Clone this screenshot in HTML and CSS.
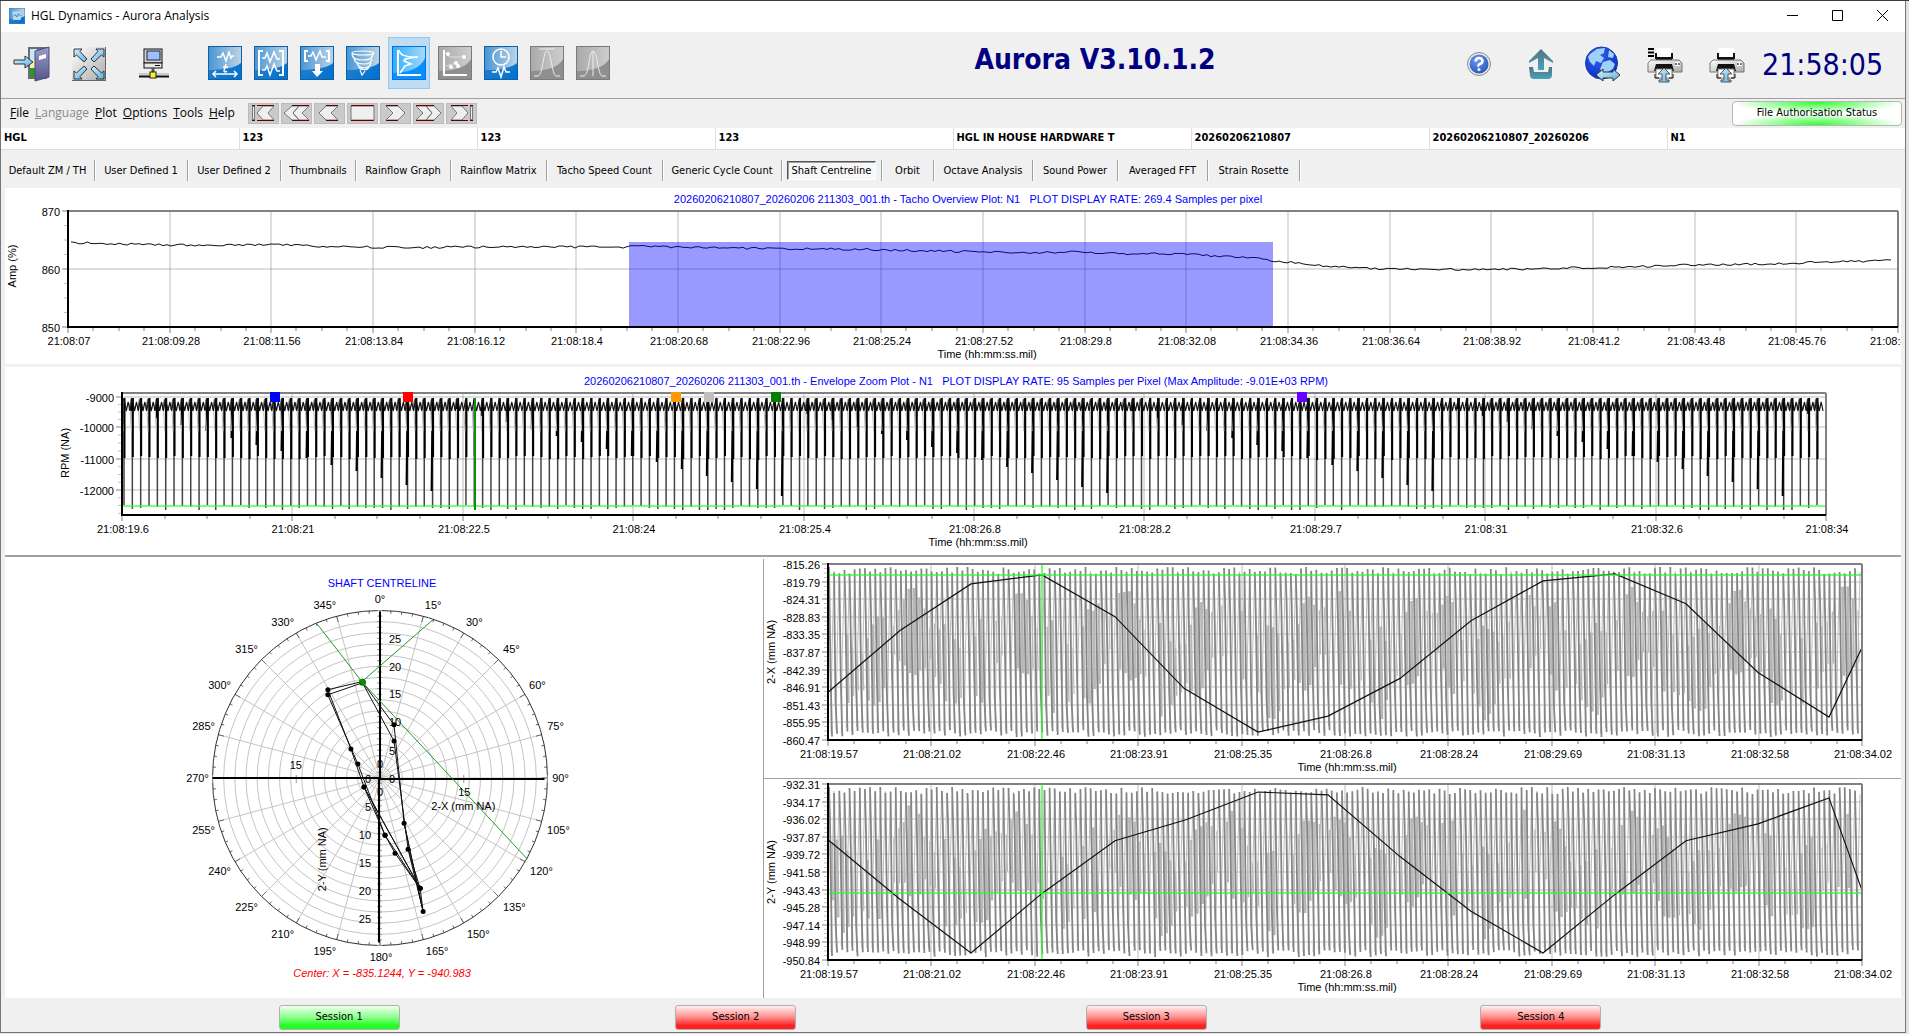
FILE: index.html
```html
<!DOCTYPE html>
<html lang="en">
<head>
<meta charset="utf-8">
<title>HGL Dynamics - Aurora Analysis</title>
<link rel="stylesheet" href="styles.css">
</head>
<body>
<svg width="0" height="0" class="defs" aria-hidden="true">
  <defs>
    <linearGradient id="blue" x1="0" y1="0" x2="1" y2="1"><stop offset="0" stop-color="#2f86cb"/><stop offset="1" stop-color="#0070d0"/></linearGradient>
    <linearGradient id="bluelite" x1="0" y1="0" x2="1" y2="0"><stop offset="0" stop-color="#4a97d5"/><stop offset="1" stop-color="#bcd3e4"/></linearGradient>
    <linearGradient id="hot" x1="0" y1="0" x2="1" y2="0"><stop offset="0" stop-color="#2fb0ff"/><stop offset="1" stop-color="#a6d9fb"/></linearGradient>
    <linearGradient id="greylite" x1="0" y1="0" x2="1" y2="0"><stop offset="0" stop-color="#aaaaaa"/><stop offset="1" stop-color="#cdcdcd"/></linearGradient>
    <linearGradient id="arrow" x1="0" y1="0" x2="1" y2="1"><stop offset="0" stop-color="#d8f2fc"/><stop offset="1" stop-color="#58aee6"/></linearGradient>
    <linearGradient id="metal" x1="0" y1="0" x2="1" y2="1"><stop offset="0" stop-color="#ffffff"/><stop offset="1" stop-color="#aaaaaa"/></linearGradient>
    <linearGradient id="door" x1="0" y1="0" x2="0" y2="1"><stop offset="0" stop-color="#9c9cc8"/><stop offset="1" stop-color="#55558c"/></linearGradient>
    <linearGradient id="teal" x1="0" y1="0" x2="0" y2="1"><stop offset="0" stop-color="#5a6f7c"/><stop offset="1" stop-color="#43a5bd"/></linearGradient>
    <radialGradient id="ball" cx=".4" cy=".3" r=".8"><stop offset="0" stop-color="#6f9cf0"/><stop offset="1" stop-color="#2350b8"/></radialGradient>
    <radialGradient id="globe" cx=".4" cy=".3" r=".8"><stop offset="0" stop-color="#2f62f0"/><stop offset="1" stop-color="#0828c0"/></radialGradient>
    <symbol id="tile-blue" viewBox="0 0 34 34"><rect x=".5" y=".5" width="33" height="33" fill="url(#blue)" stroke="#0d5fa6"/><path d="M1 1H33V17C27 22 14 24 1 24Z" fill="url(#bluelite)"/></symbol>
    <symbol id="tile-hot" viewBox="0 0 34 34"><rect x=".5" y=".5" width="33" height="33" fill="#0a8fff" stroke="#0a6fe0"/><path d="M1 1H33V12C29 22 16 27 1 27Z" fill="url(#hot)"/></symbol>
    <symbol id="tile-grey" viewBox="0 0 34 34"><rect x=".5" y=".5" width="33" height="33" fill="#8f8f8f" stroke="#7a7a7a"/><path d="M1 1H33V13C29 21 17 25 1 25Z" fill="url(#greylite)"/></symbol>
    <symbol id="printer" viewBox="0 0 36 38">
      <path d="M9 3H25V14H9Z" fill="#fff"/><path d="M9 8V14M25 8V14" fill="none" stroke="#111" stroke-width="2"/>
      <rect x="9" y="12" width="16" height="3" fill="#111"/>
      <path d="M4 15H32L35 18V27H1V18Z" fill="url(#metal)" stroke="#777"/><path d="M28 17h5v4h-5z" fill="#fff"/><circle cx="29" cy="19" r="1" fill="#444"/><circle cx="32" cy="19" r="1" fill="#444"/>
      <path d="M9 19H25L27 26H7Z" fill="#111"/><path d="M9 24H25V33H9Z" fill="#fff" stroke="#777"/><path d="M8 29V33H12M26 29V33H22" fill="none" stroke="#111"/>
      <path d="M17 23L23 29H19V35H22V37H12V35H15V29H11Z" fill="url(#arrow)" stroke="#555"/>
    </symbol>
  </defs>
</svg>

<div class="window">
  <header class="titlebar">
    <svg class="app-icon" viewBox="0 0 34 34"><use href="#tile-blue"/><path d="M7 8C12 6 20 9 27 7L25 25C20 27 14 24 9 26Z" fill="#b7d9f0"/><path d="M9 18l4-4 4 5 3-7 5 5" stroke="#2f7fc0" stroke-width="2" fill="none"/></svg>
    <h1 class="window-title">HGL Dynamics - Aurora Analysis</h1>
    <div class="win-controls">
      <button aria-label="Minimise"><svg width="11" height="11"><path d="M0 5.5H11" stroke="#000"/></svg></button>
      <button aria-label="Maximise"><svg width="11" height="11"><path d="M.5 .5H10.500V10.500H.5Z" stroke="#000" fill="none"/></svg></button>
      <button aria-label="Close"><svg width="11" height="11"><path d="M0 0L11 11M11 0L0 11" stroke="#000"/></svg></button>
    </div>
  </header>

  <div class="toolbar">
    <div class="system-tools">
      <button aria-label="Exit"><svg width="38" height="36"><path d="M15 1H34V33H15Z" fill="#6a6a78"/><path d="M17 3H24V14H17Z" fill="#c9e8fb"/><path d="M17 14H24V22H17Z" fill="#f4f3b0"/><path d="M17 22H24V31H17Z" fill="#2c9a1c"/><path d="M22 5L36 1V31L22 35Z" fill="url(#door)" stroke="#4c4c7c"/><path d="M26 10L33 8V12L26 14Z" fill="#fff"/><path d="M1 14H12V10L20 16L12 22V18H1Z" fill="url(#arrow)" stroke="#333"/></svg></button>
      <button aria-label="Full screen"><svg width="34" height="34"><rect width="34" height="34" fill="url(#metal)"/><path d="M34 0V34H0" fill="none" stroke="#666" stroke-width="2"/><g fill="url(#arrow)" stroke="#333"><path d="M2 2H10L8 4.500L15 12L12 15L4.500 8L2 10Z"/><path d="M32 2H24L26 4.500L19 12L22 15L29.500 8L32 10Z"/><path d="M2 32H10L8 29.500L15 22L12 19L4.500 26L2 24Z"/><path d="M32 32H24L26 29.500L19 22L22 19L29.500 26L32 24Z"/></g></svg></button>
      <button aria-label="Network"><svg width="30" height="32"><rect x="5" y="1" width="18" height="14" fill="#d5d5d5" stroke="#111"/><rect x="8" y="3" width="13" height="9" fill="#9dc0ff" stroke="#223"/><rect x="5" y="15" width="18" height="5" fill="#e8e8e8" stroke="#111"/><path d="M16 17.500H21" stroke="#111"/><path d="M14 20V26" stroke="#555" stroke-width="3"/><path d="M0 26H30" stroke="#ccc" stroke-width="2"/><path d="M0 28.500H30" stroke="#111" stroke-width="2"/><rect x="11" y="24" width="6" height="6" fill="#ffee22" stroke="#222"/></svg></button>
    </div>
    <div class="plot-tools">
      <button aria-label="Time history"><svg width="34" height="34"><use href="#tile-blue"/><g fill="none" stroke="#fff" stroke-width="1.500"><path d="M9 11H13L15 7L18 15L21 6L23 12L24 10H26M15 21H20M18 18L16 25Q17 27 19 25"/><path d="M6 28H28M8 25L5 28L8 31M26 25L29 28L26 31"/></g></svg></button>
      <button aria-label="Windowed history"><svg width="34" height="34"><use href="#tile-blue"/><path d="M9 5H5V29H9M25 5H29V29H25" fill="none" stroke="#fff" stroke-width="2"/><path d="M8 12H11L13 7L16 16L20 6L23 13H26M8 24H11L13 20L16 29L20 18L23 25H26" fill="none" stroke="#fff" stroke-width="1.500"/></svg></button>
      <button aria-label="Export window"><svg width="34" height="34"><use href="#tile-blue"/><path d="M8 5H5V15H8M26 5H29V15H26" fill="none" stroke="#fff" stroke-width="2"/><path d="M8 10H11L13 6L16 14L20 5L22 11H26" fill="none" stroke="#fff" stroke-width="1.500"/><path d="M15 18H20V25H23L17 31L12 25H15Z" fill="#fff"/></svg></button>
      <button aria-label="Waterfall"><svg width="34" height="34"><use href="#tile-blue"/><g fill="none" stroke="#fff" stroke-width="1.200"><ellipse cx="17" cy="7" rx="11" ry="2"/><path d="M6 8C6 12 9 14 17 14S26 12 27 8M8 12C8 16 12 18 18 18S25 16 26 13M11 17C12 20 15 22 19 22S24 20 25 17M13 21C14 24 22 25 23 21M14 24L16 29L19 25"/></g></svg></button>
      <button class="current" aria-label="Frequency plot"><svg width="34" height="34"><use href="#tile-hot"/><path d="M6 4V29H29" fill="none" stroke="#fff" stroke-width="2"/><path d="M7 4C8 9 12 11 26 11C17 12 12 12 12 15L19 18L13 20L11 23L8 27" fill="none" stroke="#fff" stroke-width="1.500"/></svg></button>
      <button aria-label="Scatter plot"><svg width="34" height="34"><use href="#tile-grey"/><path d="M6 4V29H29" fill="none" stroke="#fff" stroke-width="2"/><path d="M7 7L12 11L26 11M8 20L18 17" fill="none" stroke="#ddd"/><g fill="#fff"><circle cx="10" cy="8" r="2"/><circle cx="26" cy="11" r="2"/><circle cx="18" cy="17" r="2"/><circle cx="20" cy="20" r="2"/><circle cx="13" cy="21" r="2"/></g></svg></button>
      <button aria-label="Time marker"><svg width="34" height="34"><use href="#tile-blue"/><g fill="none" stroke="#fff" stroke-width="1.500"><circle cx="17" cy="11" r="8"/><path d="M17 5V11H22M8 26H12L14 22L17 31L20 21L22 26H26"/></g></svg></button>
      <button aria-label="Peak shape"><svg width="34" height="34"><use href="#tile-grey"/><path d="M9 3H25M4 30H8C13 29 13 5 17 5S22 29 26 30H30" fill="none" stroke="#eee"/></svg></button>
      <button aria-label="Peak centre"><svg width="34" height="34"><use href="#tile-grey"/><path d="M17 5V30M4 30H8C13 29 13 5 17 5S22 29 26 30H30" fill="none" stroke="#eee"/></svg></button>
    </div>
    <h2 class="product">Aurora V3.10.1.2</h2>
    <div class="output-tools">
      <button aria-label="Help"><svg width="24" height="24"><circle cx="12" cy="12" r="11.500" fill="#e8e8e8" stroke="#8a8a8a"/><circle cx="12" cy="12" r="9.500" fill="url(#ball)"/><path d="M8.500 9.500Q9 6 12 6T15.500 9Q15.500 11 13 12T12 14.500" fill="none" stroke="#fff" stroke-width="2.500"/><circle cx="12" cy="17.500" r="1.500" fill="#fff"/></svg></button>
      <button aria-label="Upload"><svg width="24" height="30"><path d="M12 0L24 12V14L15 9V21H9V9L0 14V12Z" fill="url(#teal)"/><path d="M0 18H4L5 23H19L20 18H23V26Q23 30 19 30H5Q1 30 1 26Z" fill="url(#teal)"/></svg></button>
      <button aria-label="Web transfer"><svg width="36" height="38"><circle cx="16.500" cy="18" r="16" fill="url(#globe)" stroke="#1a3aa8"/><path d="M5 9L12 4L20 3L19 8L15 10L19 13L16 18L11 16L9 21L5 17L3 12ZM18 17L25 15L30 19L28 24L23 27L20 31L15 24ZM24 5L29 9L28 13L23 12Z" fill="#9fd0f8"/><path d="M11 30L18 24V27H28V24L35 30L28 36V33H18V36Z" fill="url(#arrow)" stroke="#333"/></svg></button>
      <button aria-label="Print report"><svg width="36" height="38"><use href="#printer"/><path d="M1 4H7M1 7.500H7M1 11H7" stroke="#000" stroke-width="2"/></svg></button>
      <button aria-label="Print"><svg width="36" height="38"><use href="#printer"/></svg></button>
    </div>
    <time class="clock">21:58:05</time>
  </div>

  <div class="menubar">
    <nav class="menu">
      <button><u>F</u>ile</button><button disabled><u>L</u>anguage</button><button><u>P</u>lot</button><button><u>O</u>ptions</button><button><u>T</u>ools</button><button><u>H</u>elp</button>
    </nav>
    <div class="transport">
      <button aria-label="First"><svg width="27" height="16"><path d="M3.500 1V15" stroke="#777" stroke-width="3"/><path d="M3.500 2V14" stroke="#efefef"/><path d="M24 1H13L7 8L13 15H24L18 8Z" fill="#efefef" stroke="#777"/><path d="M24 .5H7M24 15.500H7M2 .5H5M2 15.500H5" stroke="#600"/></svg></button>
      <button aria-label="Fast back"><svg width="27" height="16"><path d="M16 1H9L1 8L9 15H16L10 8ZM26 1H16L10 8L16 15H26L19 8Z" fill="#efefef" stroke="#777"/><path d="M26 .5H9M26 15.500H9" stroke="#600"/></svg></button>
      <button aria-label="Back"><svg width="27" height="16"><path d="M22 1H10L3 8L10 15H22L15 8Z" fill="#efefef" stroke="#777"/><path d="M22 .5H10M22 15.500H10" stroke="#600"/></svg></button>
      <button aria-label="Stop"><svg width="27" height="16"><path d="M2 1H25V15H2Z" fill="#efefef" stroke="#777"/><path d="M2 .5H25M2 15.500H25" stroke="#600"/></svg></button>
      <button aria-label="Forward"><svg width="27" height="16"><path d="M4 1H16L23 8L16 15H4L11 8Z" fill="#efefef" stroke="#777"/><path d="M4 .5H16M4 15.500H16" stroke="#600"/></svg></button>
      <button aria-label="Fast forward"><svg width="27" height="16"><path d="M1 1H11L17 8L11 15H1L8 8ZM11 1H19L26 8L19 15H11L17 8Z" fill="#efefef" stroke="#777"/><path d="M1 .5H19M1 15.500H19" stroke="#600"/></svg></button>
      <button aria-label="Last"><svg width="27" height="16"><path d="M23.500 1V15" stroke="#777" stroke-width="3"/><path d="M23.500 2V14" stroke="#efefef"/><path d="M3 1H14L20 8L14 15H3L9 8Z" fill="#efefef" stroke="#777"/><path d="M3 .5H20M3 15.500H20M22 .5H25M22 15.500H25" stroke="#600"/></svg></button>
    </div>
    <button class="auth">File Authorisation Status</button>
  </div>

  <table class="record">
    <tr><td>HGL</td><td>123</td><td>123</td><td>123</td><td>HGL IN HOUSE HARDWARE T</td><td>20260206210807</td><td>20260206210807_20260206</td><td>N1</td></tr>
  </table>

  <div class="tabs" role="tablist">
    <button role="tab">Default ZM / TH</button>
    <button role="tab">User Defined 1</button>
    <button role="tab">User Defined 2</button>
    <button role="tab">Thumbnails</button>
    <button role="tab">Rainflow Graph</button>
    <button role="tab">Rainflow Matrix</button>
    <button role="tab">Tacho Speed Count</button>
    <button role="tab">Generic Cycle Count</button>
    <button role="tab" aria-selected="true"><span>Shaft Centreline</span></button>
    <button role="tab">Orbit</button>
    <button role="tab">Octave Analysis</button>
    <button role="tab">Sound Power</button>
    <button role="tab">Averaged FFT</button>
    <button role="tab">Strain Rosette</button>
  </div>

  <main class="plots">
    <section class="plot overview" id="overview"></section>
    <section class="plot envelope" id="envelope"></section>
    <div class="lower">
      <section class="plot polar" id="polar"></section>
      <div class="channels">
        <section class="plot" id="channel-x"></section>
        <section class="plot" id="channel-y"></section>
      </div>
    </div>
  </main>

  <footer class="sessions">
    <button class="session active">Session 1</button>
    <button class="session">Session 2</button>
    <button class="session">Session 3</button>
    <button class="session">Session 4</button>
  </footer>
</div>
<script src="charts.js"></script>
</body>
</html>
```
FILE: styles.css
```css
* { box-sizing: border-box; }

body {
  margin: 0;
  height: 100vh;
  min-height: 800px;
  display: flex;
  padding: 1px 3px 1px 0;
  background: #e2e2e2;
  box-shadow: inset 0 1px #3a3a3c;
  font: 11px/14px "DejaVu Sans Condensed", "Noto Sans", sans-serif;
  color: #000;
}

button {
  margin: 0;
  padding: 0;
  border: 0;
  background: none;
  font: inherit;
  color: inherit;
}

svg { display: block; }
.defs { position: absolute; top: 0; left: 0; }

.window {
  flex: 1;
  min-width: 0;
  display: flex;
  flex-direction: column;
  background: #f0f0f0;
  border: 1px solid #777;
  border-top: 0;
}

.titlebar {
  height: 31px;
  display: flex;
  align-items: center;
  gap: 6px;
  padding: 0 0 2px 8px;
  background: #fff;
}
.app-icon { width: 16px; height: 16px; }
.window-title { flex: 1; margin: 0; font: 12px/16px "Open Sans", "Noto Sans", sans-serif; }
.win-controls { display: flex; }
.win-controls button { width: 45px; height: 29px; display: grid; place-items: center; }

.toolbar {
  height: 67px;
  display: flex;
  align-items: flex-start;
  border-bottom: 1px solid #a0a0a0;
}
.toolbar button { display: grid; place-items: center; height: 52px; }
.system-tools { display: flex; gap: 15px; padding: 6px 0 0 10px; width: 203px; }
.system-tools button { width: 42px; }
.system-tools button:last-child { margin-left: 8px; }
.plot-tools { display: flex; gap: 4px; padding-top: 5px; }
.plot-tools button { width: 42px; }
.plot-tools .current { background: #c0dcf3; border: 1px solid #90c8f6; }
.product {
  flex: 1;
  margin: 0;
  padding: 10px 0 0 128px;
  text-align: center;
  font: bold 28px/36px "DejaVu Sans Condensed", "Noto Sans", sans-serif;
  color: #000080;
}
.output-tools { display: flex; padding-top: 6px; }
.output-tools button { width: 62px; }
.clock {
  width: 147px;
  padding: 15px 0 0 4px;
  font: 30px/36px "DejaVu Sans Condensed", "Noto Sans", sans-serif;
  color: #000080;
  white-space: nowrap;
}

.menubar { height: 29px; display: flex; align-items: center; padding: 0 3px 1px 9px; }
.menu { display: flex; gap: 6px; width: 238px; font: 12px/16px "Open Sans", "Noto Sans", sans-serif; }
.menu button:disabled { color: #8a8a8a; }
.transport { display: flex; gap: 2px; flex: 1; }
.transport button {
  width: 31px;
  height: 21px;
  display: grid;
  place-items: center;
  background: #cacaca;
  border: 1px solid #bbb;
}
.auth {
  width: 170px;
  height: 25px;
  border: 1px solid #b5b5b5;
  border-radius: 4px;
  background:
    radial-gradient(ellipse 50% 50% at 50% 0, #2dff2d, transparent),
    radial-gradient(ellipse 50% 50% at 50% 100%, #2dff2d, transparent),
    #fff;
}

.record { width: 100%; table-layout: fixed; border-collapse: collapse; background: #fff; font-weight: bold; }
.record td { height: 21px; padding: 0 3px; border: solid #dedede; border-width: 0 1px 1px 0; white-space: nowrap; overflow: hidden; }
.record td:last-child { border-right: 0; }

.tabs {
  display: grid;
  grid-template-columns: 94px 93px 93px 75px 95px 96px 116px 119px 100px 52px 99px 85px 90px 92px;
  align-items: center;
  height: 38px;
  padding-bottom: 2px;
}
.tabs button { height: 21px; margin-top: 6px; border-right: 1px solid #a0a0a0; box-shadow: 1px 0 #fff; white-space: nowrap; }
.tabs [aria-selected="true"] span {
  display: inline-block;
  height: 19px;
  padding: 2px 4px 0;
  border: 1px solid;
  border-color: #555 #fff #fff #555;
  box-shadow: inset 1px 1px #a0a0a0;
  background: #f7f7f7;
}

.plots { flex: 1; min-height: 0; display: flex; flex-direction: column; padding: 0 4px; min-width: 900px; }
.plot { position: relative; min-width: 0; overflow: hidden; background: #fff; }
.plot svg { position: absolute; inset: 0; }
.overview { flex: 177 0 0; margin-bottom: 3px; }
.envelope { flex: 188 0 0; border-bottom: 2px solid #a0a0a0; }
.lower { flex: 442 0 0; display: flex; background: #fff; }
.polar { flex: 758 1 0; }
.channels { flex: 1138 1 0; min-width: 0; display: flex; flex-direction: column; margin-top: 2px; border-left: 1px solid #a0a0a0; }
.channels .plot { flex: 1; }
.channels .plot:first-child { border-bottom: 1px solid #a0a0a0; }

.plot text { font: 11px "Liberation Sans", Arial, sans-serif; fill: #000; }
.plot .title { fill: #00f; }
.plot .centre { fill: #f00; font-style: italic; }

.sessions {
  height: 34px;
  padding-top: 4px;
  display: grid;
  grid-template-columns: 278fr 121px 276fr 121px 290fr 121px 274fr 121px 304fr;
  align-items: center;
}
.session {
  height: 25px;
  border: 1px solid #b0b0b0;
  border-radius: 3px;
  background: linear-gradient(#fff0f0, #ff8a8a 50%, #ff2020 85%);
}
.session.active { background: linear-gradient(#f0fff0, #8aff8a 50%, #20ff20 85%); }
.session:nth-child(1) { grid-column: 2; }
.session:nth-child(2) { grid-column: 4; }
.session:nth-child(3) { grid-column: 6; }
.session:nth-child(4) { grid-column: 8; }
```
FILE: charts.js
```js
const line = (x1, y1, x2, y2, c, w = 1) =>
  `<line x1="${x1}" y1="${y1}" x2="${x2}" y2="${y2}" stroke="${c}" stroke-width="${w}"/>`;
const text = (x, y, s, anchor = 'middle', extra = '') =>
  `<text x="${x}" y="${y}" text-anchor="${anchor}" xml:space="preserve" ${extra}>${s}</text>`;
const vtext = (x, y, s) => text(x + 4, y, s, 'middle', `transform="rotate(-90 ${x + 4} ${y})"`);
const poly = (pts, c, w = 1) =>
  `<polyline points="${pts.map(p => p[0].toFixed(1) + ',' + p[1].toFixed(1)).join(' ')}" fill="none" stroke="${c}" stroke-width="${w}"/>`;

function noise(seed) {
  return () => (seed = (seed * 16807) % 2147483647) / 2147483647;
}

function interpolate(points, x) {
  let i = 1;
  while (i < points.length - 1 && points[i][0] < x) i++;
  const [a, b] = [points[i - 1], points[i]];
  return a[1] + (b[1] - a[1]) * (x - a[0]) / (b[0] - a[0]);
}

function mount(id, draw) {
  const box = document.getElementById(id);
  const w = box.clientWidth, h = box.clientHeight;
  box.innerHTML = `<svg width="${w}" height="${h}">${draw(w, h)}</svg>`;
}

// Frame, grid, ticks and labels shared by every rectangular plot.
function axes(f, xs, ys) {
  const { l, r, t, b } = f;
  const dx = (r - l) / (xs.length - 1);
  let grid = '', ticks = '', labels = '';
  xs.forEach((s, i) => {
    const x = Math.round(l + i * dx);
    if (i) grid += line(x, t, x, b, 'rgba(0,0,0,.13)', 2);
    ticks += line(x, b, x, b + 6, '#c0c0c0', 2);
    if (i < xs.length - 1) for (let k = 1; k < 4; k++) {
      const m = Math.round(x + k * dx / 4);
      ticks += line(m, b, m, b + 4, '#c0c0c0', 2);
    }
    labels += text(x + 1, b + 18, '21:08:' + s);
  });
  const last = ys.length - 1;
  ys.forEach(([s, y], i) => {
    if (y > t + 2 && y < b - 2) grid += line(l, y, r, y, 'rgba(0,0,0,.13)', 2);
    ticks += line(l - 6, y, l, y, '#c0c0c0', 2);
    const gap = i < last ? ys[i + 1][1] - y : y - ys[i - 1][1];
    for (let k = 1; k < 4; k++) {
      const m = y + k * gap / 4;
      if (m < b) ticks += line(l - 4, m, l, m, '#c0c0c0', 1);
    }
    labels += text(l - 8, y + 5, s, 'end');
  });
  return {
    under: grid,
    over: line(l, t, r, t, '#808080', 2) + line(r, t, r, b, '#808080', 2) + ticks +
      line(l, t - 1, l, b + 1, '#000', 2) + line(l, b, r, b, '#000', 2) + labels
  };
}

function overview(w, h) {
  const f = { l: 63, r: w - 3, t: 23, b: h - 38 };
  const mid = Math.round((f.t + f.b) / 2);
  const a = axes(f, ['07', '09.28', '11.56', '13.84', '16.12', '18.4', '20.68', '22.96', '25.24', '27.52', '29.8',
    '32.08', '34.36', '36.64', '38.92', '41.2', '43.48', '45.76', '48.04'],
    [['870', f.t], ['860', mid], ['850', f.b]]);
  const trend = [[0, 32], [25, 32], [50, 33], [90, 34], [230, 34], [245, 35.5], [340, 36.500], [410, 36], [560, 36],
    [575, 34.500], [615, 36.500], [700, 37.500], [800, 38.500], [860, 40], [950, 41.500], [1000, 41], [1035, 42.500], [1120, 43],
    [1160, 46], [1190, 46], [1205, 50], [1235, 52], [1260, 55], [1310, 57.500], [1360, 58.500], [1460, 58], [1500, 57],
    [1560, 56], [1620, 54], [1700, 53], [1740, 51.500], [1825, 49.500]];
  const rnd = noise(17), pts = [];
  const kx = (f.r - f.l) / 1830, ky = (f.b - f.t) / 116;
  for (let x = 3; x < 1826; x += 4) pts.push([f.l + x * kx, f.t + (interpolate(trend, x) + (rnd() - .5) * 2.200) * ky]);
  const s0 = f.l + 561 * kx, s1 = f.l + 1205 * kx, st = f.t + 31 * ky;
  return a.under + poly(pts, '#111') +
    `<rect x="${s0}" y="${st}" width="${s1 - s0}" height="${f.b - st}" fill="rgba(0,0,255,.4)"/>` + a.over +
    text(w / 2 + 15, 15, '20260206210807_20260206 211303_001.th - Tacho Overview Plot: N1   PLOT DISPLAY RATE: 269.4 Samples per pixel', 'middle', 'class="title"') +
    text((f.l + f.r) / 2 + 4, h - 7, 'Time (hh:mm:ss.mil)') + vtext(7, mid - 3, 'Amp (%)');
}

function envelope(w, h) {
  const f = { l: 117, r: w - 75, t: 26, b: h - 40 };
  const k = (f.b - f.t) / 121;
  const level = y => Math.round(f.t + y * k);
  const a = axes(f, ['19.6', '21', '22.5', '24', '25.4', '26.8', '28.2', '29.7', '31', '32.6', '34'],
    [['-9000', level(4)], ['-10000', level(34)], ['-11000', level(65)], ['-12000', level(96)]]);
  const rnd = noise(5);
  const ripple = [], step = 8.34;
  let spikes = '';
  for (let i = 0, x = f.l + 2; x < f.r - 1; i++, x += step) {
    ripple.push([x, level(5)], [x + 2.200, level(18)], [x + 4.200, level(9)], [x + 6, level(18)]);
    if (Math.sin(i / 13) > 0) spikes += poly([[x - 3, level(17)], [x - 1, level(6)], [x + 2, level(17)]], '#666', 1.500);
    spikes += line(x, level(6), x, level(111 + rnd() * 5), '#444', 1.500);
    spikes += line(x + .5, level(5), x + .5, level(62 + rnd() * 4), '#000', 2);
    if (i % 3 === 1) {
      const d = 16 + ((i * 2.200) % 88);
      spikes += line(x, level(5), x - 1, level(d), '#000', 2);
    }
    spikes += line(x - 2, level(18), x - 1, level(38), '#bbb', 1);
  }
  const cx = Math.round(f.l + (f.r - f.l) * .2072);
  const marks = [[.09, '#00f'], [.168, '#f00'], [.3254, '#ff9900'], [.3446, '#c0c0c0'], [.3838, '#008000'], [.6926, '#6600ff']]
    .map(([p, c]) => `<rect x="${Math.round(f.l + p * (f.r - f.l)) - 5}" y="${f.t - 1}" width="10" height="10" fill="${c}"/>`).join('');
  return a.under + spikes + poly(ripple, '#111', 1.200) +
    line(f.l, level(112), f.r, level(112), 'rgba(50,255,50,.65)', 2) + line(cx, level(5), cx, level(116), '#0a900a', 2) +
    a.over + marks +
    text(w / 2 + 3, 18, '20260206210807_20260206 211303_001.th - Envelope Zoom Plot - N1   PLOT DISPLAY RATE: 95 Samples per Pixel (Max Amplitude: -9.01E+03 RPM)', 'middle', 'class="title"') +
    text((f.l + f.r) / 2 + 4, h - 9, 'Time (hh:mm:ss.mil)') + vtext(60, (f.t + f.b) / 2 - 1, 'RPM (NA)');
}

// Vibration channel: dense waveform, sampled trace in black, cursor in green.
function channel(name, values, trace, cursorY, seed) {
  return (w, h) => {
    const f = { l: 64, r: w - 39, t: 5, b: h - 38 };
    const n = values.length - 1;
    const a = axes(f, ['19.57', '21.02', '22.46', '23.91', '25.35', '26.8', '28.24', '29.69', '31.13', '32.58', '34.02'],
      values.map((v, i) => ['-' + v, Math.round(f.t + i * (f.b - f.t) / n)]));
    const rnd = noise(seed);
    const H = f.b - f.t;
    let wave = '';
    for (let i = 0, x = f.l + 1; x < f.r - 3; i++, x += 5.130) {
      const top = f.t + 3 + rnd() * 7, bot = f.b - 3 - rnd() * 7;
      wave += poly([[x + 2, bot - 4], [x + 3, f.t + H * .5], [x + 5, top + 4]], '#bdbdbd', 1);
      const beat = .5 + .5 * Math.sin(i * .9);
      const mid = .5 + .12 * Math.sin(i * .31), half = .08 + .14 * beat + rnd() * .06;
      if (rnd() > .3) wave += poly([[x + 3, f.t + H * (mid - half)], [x + 4, f.t + H * (mid + half)]], '#b8b8b8', 1 + beat * 2);
      const bend = .2 + rnd() * .4;
      wave += poly([[x, top], [x + 1, f.t + H * bend], [x + 1.500, f.t + H * (bend + .2)], [x + 3, bot]], '#858585', 1.800);
    }
    const kx = (f.r - f.l) / 1034, ky = H / 177;
    const cx = Math.round(f.l + 214 * kx), cy = Math.round(f.t + cursorY * ky);
    return a.under + wave + poly(trace.map(p => [f.l + p[0] * kx, f.t + p[1] * ky]), '#111', 1.200) +
      line(f.l, cy, f.r, cy, 'rgba(40,255,40,.65)', 2) + line(cx, f.t, cx, f.b, 'rgba(40,255,40,.65)', 2) + a.over +
      text((f.l + f.r) / 2 + 2, f.b + 31, 'Time (hh:mm:ss.mil)') + vtext(7, (f.t + f.b) / 2, name);
  };
}

function polar(w, h) {
  const R = h / 2 - 53, k = R / 167, cx = Math.round(w / 2 - 4), cy = Math.round(h / 2);
  const at = (deg, r) => [Math.sin(deg * Math.PI / 180) * r, -Math.cos(deg * Math.PI / 180) * r];
  let s = '';
  for (let i = 1; i < 15; i++) s += `<circle r="${i * R / 15}" fill="none" stroke="#c4c4c4"/>`;
  for (let d = 0; d < 360; d += 15) s += line(0, 0, ...at(d, R), '#c4c4c4');
  for (let d = 0; d < 360; d += 3.750) {
    const p = at(d, R), q = at(d, R - (d % 15 ? 3 : 6));
    s += line(...p, ...q, '#666');
  }
  s += `<circle r="${R}" fill="none" stroke="#333"/>`;
  for (let i = -30; i <= 30; i++) s += line(-3, i * R / 30, 2, i * R / 30, '#999') + (i % 15 ? '' : line(i * R / 30, -3, i * R / 30, 5, '#999'));
  s += line(0, -R + 1, 0, 0, '#000', 2) + line(-1, 0, -1, R - 3, '#000', 2) + line(-R, 0, 0, 0, '#000', 2) + line(0, 1, R - 3, 1, '#000', 2);
  const orbit = [[-18, -96], [-52, -88], [-29, -29], [-16, 9], [40, 110], [43, 133], [24, 45], [14, -53], [-17, -95], [-52, -83],
    [-22, -14], [5, 57], [40, 110], [15, 75], [5, 57], [-16, 9], [40, 110], [28, 71], [14, -37], [-18, -96]].map(p => [p[0] * k, p[1] * k]);
  s += poly(orbit, '#111');
  s += poly([[24 * k, 45 * k], [43 * k, 133 * k], [28 * k, 71 * k]], '#111');
  orbit.forEach(p => { s += `<circle cx="${p[0]}" cy="${p[1]}" r="2.500"/>`; });
  s += `<circle cx="${-17.5 * k}" cy="${-95.5 * k}" r="3.500" fill="#008000"/>`;
  s += poly([[-63, -154], [-18, -96], [147, 81]].map(p => [p[0] * k, p[1] * k]), '#289828') +
    poly([[-18, -96], [53, -158]].map(p => [p[0] * k, p[1] * k]), '#289828');
  const rim = { 0: [0, -179], 15: [53, -173], 30: [94, -156], 45: [131, -129], 60: [157, -93], 75: [175, -52], 90: [180, 0],
    105: [178, 52], 120: [161, 93], 135: [134, 129], 150: [98, 156], 165: [57, 173], 180: [1, 179], 195: [-55, 173],
    210: [-97, 156], 225: [-133, 129], 240: [-160, 93], 255: [-176, 52], 270: [-182, 0], 285: [-176, -52], 300: [-160, -93],
    315: [-133, -129], 330: [-97, -156], 345: [-55, -173] };
  for (const d in rim) s += text(rim[d][0] * (R + 13) / 180, rim[d][1] * (R + 13) / 180 + 4, d + '°');
  [[15, -139, 25], [15, -111, 20], [15, -84, 15], [15, -56, 10], [12, -27, 5], [0, -14, 0], [12, 1, 0], [-12, 1, 0], [0, 14, 0],
    [-12, 29, 5], [-15, 57, 10], [-15, 85, 15], [-15, 113, 20], [-15, 141, 25], [-84, -13, 15], [84, 14, 15]]
    .forEach(([x, y, v]) => { s += text(x * k, y * k + 4, v); });
  s += text(83 * k, 28 * k + 4, '2-X (mm NA)') + vtext(-58 * k, 81 * k, '2-Y (mm NA)');
  s += text(2, -R - 24, 'SHAFT CENTRELINE', 'middle', 'class="title"') +
    text(2, R + 31, 'Center: X = -835.1244, Y = -940.983', 'middle', 'class="centre"');
  return `<g transform="translate(${cx} ${cy})">${s}</g>`;
}

const traceX = [[0, 129], [72, 67], [143, 20], [214, 11], [287, 53], [356, 125], [430, 169], [500, 153], [572, 115], [643, 57],
  [715, 17], [787, 10], [858, 40], [930, 109], [1001, 154], [1034, 84]];
const traceY = [[0, 56], [72, 116], [143, 170], [214, 110], [287, 57], [358, 36], [430, 8], [500, 11], [572, 73], [643, 128],
  [715, 170], [787, 111], [858, 57], [930, 40], [1001, 14], [1034, 107]];

function drawAll() {
  mount('overview', overview);
  mount('envelope', envelope);
  mount('polar', polar);
  mount('channel-x', channel('2-X (mm NA)', ['815.26', '819.79', '824.31', '828.83', '833.35', '837.87', '842.39', '846.91', '851.43', '855.95', '860.47'], traceX, 11, 31));
  mount('channel-y', channel('2-Y (mm NA)', ['932.31', '934.17', '936.02', '937.87', '939.72', '941.58', '943.43', '945.28', '947.14', '948.99', '950.84'], traceY, 110, 77));
}

drawAll();
window.addEventListener('resize', drawAll);
```
